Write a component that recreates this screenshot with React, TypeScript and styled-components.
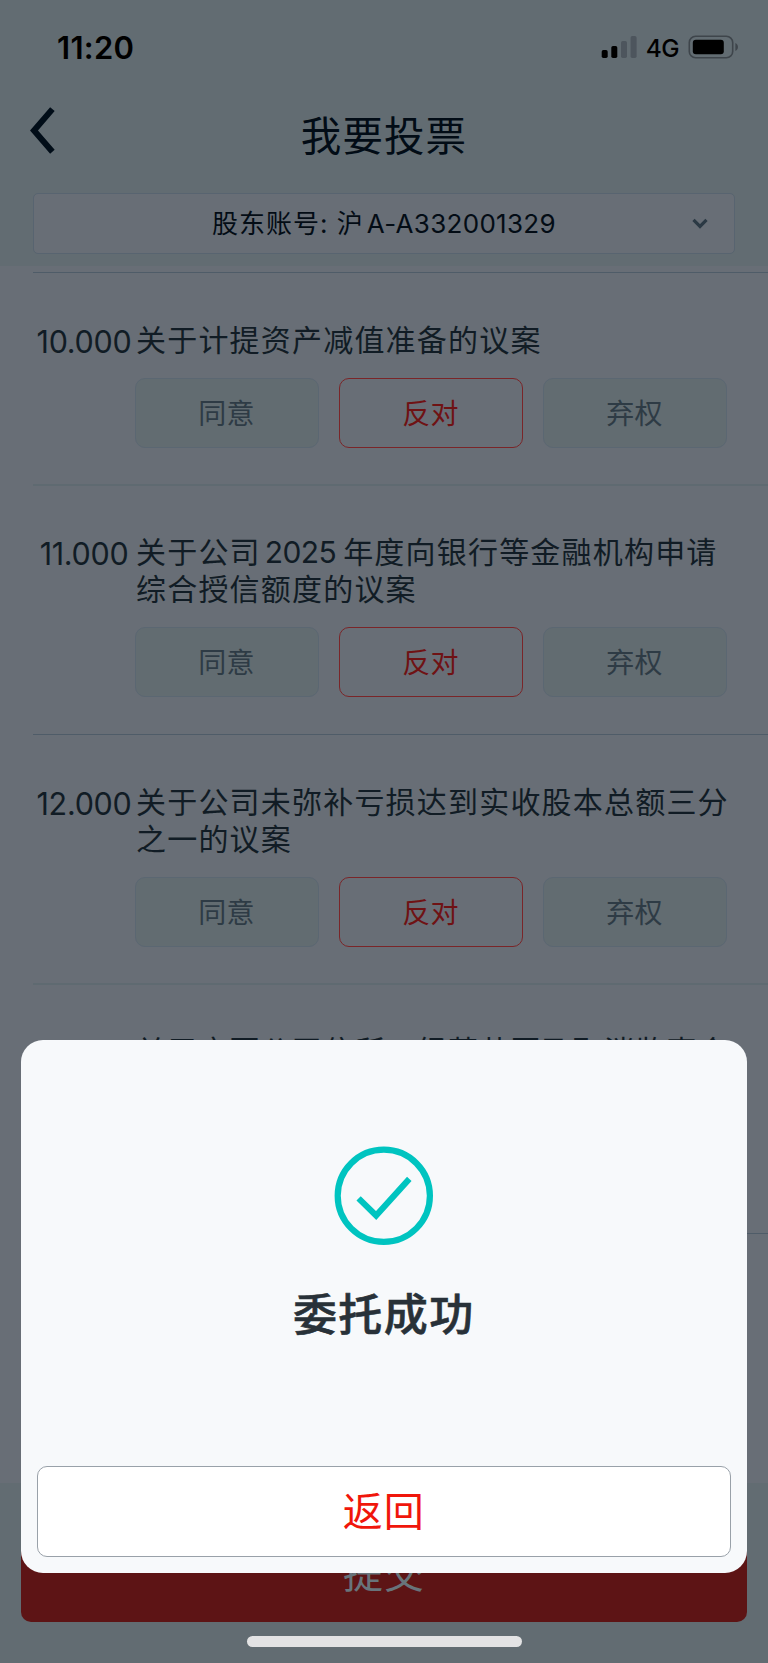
import React from "react";
import styled, { createGlobalStyle } from "styled-components";

const GlobalStyle = createGlobalStyle`
  * { box-sizing: border-box; }
  html, body { margin: 0; padding: 0; overflow: hidden; }
  body { font-family: Inter, "Noto Sans CJK SC", sans-serif; }
  button { font-family: inherit; margin: 0; padding: 0; cursor: pointer; }
`;

const Screen = styled.div`
  position: relative;
  display: flex;
  flex-direction: column;
  width: 768px;
  height: 1663px;
  overflow: hidden;
  background: #686e76;
`;

const Header = styled.header`
  display: flex;
  flex-direction: column;
  flex: none;
  height: 266px;
  background: #626c72;
`;

const StatusBar = styled.div`
  display: flex;
  align-items: center;
  height: 94px;
  padding: 0 29px 0 57px;
  color: #000;
`;

const Clock = styled.span`
  flex: 1;
  font-size: 31px;
  font-weight: 600;
  letter-spacing: 0.3px;
`;

const Network = styled.span`
  margin: 2px 9px 0 9px;
  font-size: 24.5px;
  font-weight: 500;
  letter-spacing: -0.6px;
`;

const NavBar = styled.div`
  display: grid;
  grid-template-columns: 100px 1fr 100px;
  align-items: center;
  height: 99px;
`;

const BackButton = styled.button`
  display: flex;
  height: 50px;
  margin-top: -27px;
  padding-left: 27.5px;
  border: 0;
  background: none;
`;

const Title = styled.h1`
  margin: -14px 0 0;
  text-align: center;
  font-size: 40.5px;
  font-weight: 400;
  letter-spacing: 1.1px;
  line-height: 60px;
  color: #020c16;
`;

const AccountSelect = styled.div`
  display: grid;
  grid-template-columns: 60px 1fr 60px;
  align-items: center;
  height: 61px;
  margin: 0 33px;
  border: 1px solid #586470;
  border-radius: 5px;
  background: #686e76;

  svg {
    justify-self: end;
    margin-right: 26px;
  }
`;

const AccountText = styled.span`
  grid-column: 2;
  padding-bottom: 4px;
  text-align: center;
  font-size: 26px;
  letter-spacing: 1px;
  white-space: pre;
  color: #030c15;
`;

const AccountCode = styled.span`
  margin-left: 3px;
  font-size: 26px;
  letter-spacing: 0.3px;
`;

const ProposalList = styled.main`
  flex: none;
  height: 1217px;
  padding: 6px 0 0 33px;
`;

const Proposal = styled.section<{ $height: number; $soft?: boolean }>`
  display: grid;
  grid-template-columns: 102px 1fr;
  grid-template-rows: auto 70px;
  align-content: start;
  height: ${(p) => p.$height}px;
  padding: ${(p) => (p.$soft ? 47 : 48)}px 41px 0 0;
  border-top: ${(p) => (p.$soft ? "2px solid #5f6a71" : "1px solid #4f5c68")};
`;

const Code = styled.span`
  padding-top: 2px;
  text-align: center;
  font-size: 30.5px;
  line-height: 37px;
  letter-spacing: -0.3px;
  color: #111c25;
`;

const Subject = styled.p`
  margin: 1px -30px 19px 1px;
  font-size: 30px;
  line-height: 37px;
  letter-spacing: 1.2px;
  white-space: pre;
  color: #111c25;
`;

const Year = styled.span`
  margin: 0 7px 0 4px;
  font-size: 30px;
  letter-spacing: -0.6px;
`;

const Choices = styled.div`
  grid-column: 2;
  display: flex;
  gap: 20px;
`;

const Choice = styled.button<{ $active?: boolean }>`
  width: 184px;
  height: 70px;
  padding: 0 1px 2px 0;
  border: 1px solid ${(p) => (p.$active ? "#7a2528" : "#5b6772")};
  border-radius: 10px;
  background: ${(p) => (p.$active ? "transparent" : "#626c71")};
  font-size: 28px;
  letter-spacing: 0.2px;
  color: ${(p) => (p.$active ? "#6f1214" : "#2e3b45")};
`;

const Footer = styled.footer`
  display: flex;
  flex-direction: column;
  align-items: center;
  flex: 1;
  padding: 41px 21px 0;
  background: #626c72;
`;

const SubmitButton = styled.button`
  width: 100%;
  height: 98px;
  padding-bottom: 5px;
  border: 0;
  border-radius: 10px;
  background: #5d1415;
  font-size: 40px;
  letter-spacing: 1px;
  color: #68747b;
`;

const HomeIndicator = styled.div`
  width: 275px;
  height: 11px;
  margin-top: 14px;
  border-radius: 6px;
  background: #e3e3e4;
`;

const Dialog = styled.div`
  position: absolute;
  top: 1040px;
  left: 20.5px;
  display: flex;
  flex-direction: column;
  align-items: center;
  width: 726.5px;
  height: 533px;
  padding: 106px 16px 16px;
  border-radius: 22px;
  background: #f7f9fb;
`;

const DialogMessage = styled.h2`
  flex: 1;
  margin: 36px 0 0;
  font-size: 44px;
  font-weight: 500;
  letter-spacing: 1.4px;
  line-height: 66px;
  color: #283138;
  -webkit-text-stroke: 0.6px #283138;
`;

const ReturnButton = styled.button`
  width: 694px;
  height: 91px;
  padding-bottom: 5px;
  border: 1px solid #99a1a9;
  border-radius: 10px;
  background: #fff;
  font-size: 40px;
  letter-spacing: 1px;
  color: #f0160b;
`;

type Item = { code: string; subject: React.ReactNode; height: number; soft?: boolean };

const items: Item[] = [
  { code: "10.000", subject: "关于计提资产减值准备的议案", height: 212 },
  {
    code: "11.000",
    subject: (
      <>
        关于公司<Year>2025</Year>年度向银行等金融机构申请{"\n"}综合授信额度的议案
      </>
    ),
    height: 250,
    soft: true,
  },
  { code: "12.000", subject: "关于公司未弥补亏损达到实收股本总额三分\n之一的议案", height: 249 },
  { code: "13.000", subject: "关于变更公司住所、经营范围及取消监事会\n的议案", height: 250, soft: true },
];

const SignalIcon = () => (
  <svg width="36" height="24" viewBox="0 0 36 24">
    <rect x="0.7" y="15" width="6" height="8" rx="1.7" fill="#000" />
    <rect x="10.3" y="11" width="6" height="12" rx="1.7" fill="#000" />
    <rect x="20" y="6" width="6" height="17" rx="1.7" fill="#4d555d" />
    <rect x="29.6" y="1" width="6" height="22" rx="1.7" fill="#4d555d" />
  </svg>
);

const BatteryIcon = () => (
  <svg width="51" height="24" viewBox="0 0 51 24">
    <rect x="1.3" y="1.2" width="43.4" height="21.6" rx="6.4" fill="none" stroke="#3e454b" strokeWidth="1.6" />
    <rect x="4.8" y="4.8" width="31" height="14.4" rx="3" fill="#000" />
    <path d="M47.4 8C50.8 9.5 50.8 14.5 47.4 16Z" fill="#3e454b" />
  </svg>
);

const BackIcon = () => (
  <svg width="28" height="50" viewBox="0 0 28 50">
    <path d="M24.4 4.1L6 25.5L24.4 46.7" fill="none" stroke="#010d18" strokeWidth="6" />
  </svg>
);

const ChevronIcon = () => (
  <svg width="16" height="12" viewBox="0 0 16 12">
    <path d="M1.5 1.8L8 8.4L14.5 1.8" fill="none" stroke="#2b3944" strokeWidth="3.2" />
  </svg>
);

const SuccessIcon = () => (
  <svg width="100" height="100" viewBox="0 0 100 100">
    <circle cx="49.8" cy="49.8" r="46.1" fill="none" stroke="#00c4c0" strokeWidth="6.2" />
    <path d="M24.6 52.4L42.1 69.5L75.3 32.9" fill="none" stroke="#00c4c0" strokeWidth="6.1" />
  </svg>
);

export default function App() {
  return (
    <Screen>
      <GlobalStyle />
      <Header>
        <StatusBar>
          <Clock>11:20</Clock>
          <SignalIcon />
          <Network>4G</Network>
          <BatteryIcon />
        </StatusBar>
        <NavBar>
          <BackButton aria-label="返回">
            <BackIcon />
          </BackButton>
          <Title>我要投票</Title>
        </NavBar>
        <AccountSelect>
          <AccountText>
            股东账号: 沪<AccountCode>A-A332001329</AccountCode>
          </AccountText>
          <ChevronIcon />
        </AccountSelect>
      </Header>
      <ProposalList>
        {items.map((item) => (
          <Proposal key={item.code} $height={item.height} $soft={item.soft}>
            <Code>{item.code}</Code>
            <Subject>{item.subject}</Subject>
            <Choices>
              <Choice>同意</Choice>
              <Choice $active>反对</Choice>
              <Choice>弃权</Choice>
            </Choices>
          </Proposal>
        ))}
        <Proposal $height={1} />
      </ProposalList>
      <Footer>
        <SubmitButton>提交</SubmitButton>
        <HomeIndicator />
      </Footer>
      <Dialog role="dialog">
        <SuccessIcon />
        <DialogMessage>委托成功</DialogMessage>
        <ReturnButton>返回</ReturnButton>
      </Dialog>
    </Screen>
  );
}
